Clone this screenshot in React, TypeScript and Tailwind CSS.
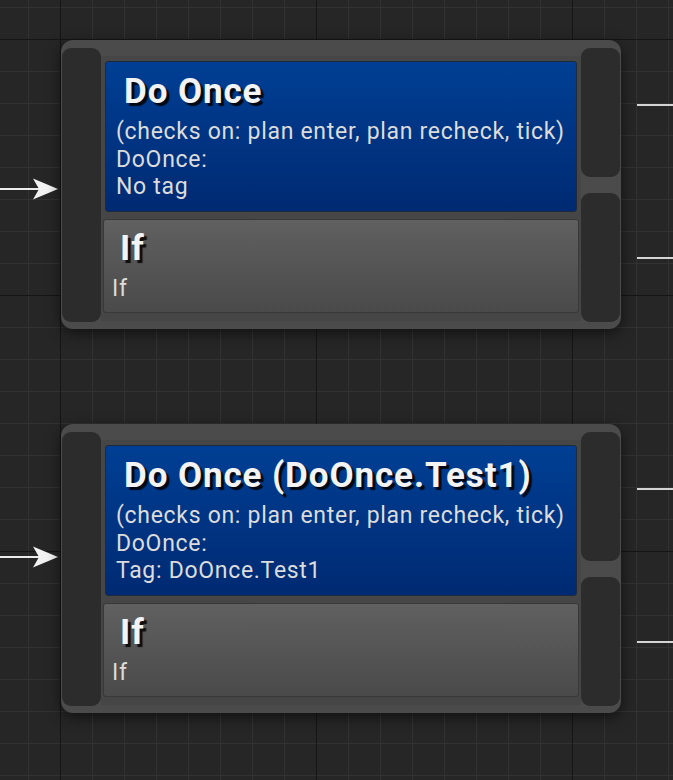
import React from "react";

type NodeProps = {
  title: string;
  lines: string[];
  arrowTop: number;
};

const font = { fontFamily: "Roboto, 'Noto Sans', sans-serif" };

function InArrow({ top }: { top: number }) {
  return (
    <div className="w-[61px] shrink-0">
      <svg width="61" height="24" viewBox="0 0 61 24" style={{ marginTop: top }}>
        <line x1="0" y1="12" x2="40" y2="12" stroke="#ececec" strokeWidth="2" />
        <polygon points="33,1.5 58,12 33,22.5 39,12" fill="#f2f2f2" />
      </svg>
    </div>
  );
}

function OutWires() {
  return (
    <div className="flex-1 flex flex-col pl-[16px] pt-[64px]">
      <div className="h-[2px] bg-[#d4d4d4]" />
      <div className="h-[2px] bg-[#d4d4d4] mt-[151px]" />
    </div>
  );
}

function Node({ title, lines, arrowTop }: NodeProps) {
  return (
    <div className="flex">
      <InArrow top={arrowTop} />
      <div className="flex w-[560px] h-[289px] shrink-0 rounded-[12px] bg-[#4b4b4b] shadow-[0_4px_14px_rgba(0,0,0,0.55)]">
        <div className="ml-px mt-[8px] mb-[7px] w-[39px] rounded-[9px] bg-[#2c2c2c]" />
        <div className="flex-1 mt-[16px] mb-[8px] bg-[#464646] flex flex-col px-[2px]">
          {/* decorator */}
          <div className="mx-[2px] mt-[5px] h-[151px] rounded-[3px] border border-[#1f2a3c] bg-[linear-gradient(to_bottom,#003f94,#002a72)] pl-[10px] pt-[10px]">
            <div
              className="ml-[8px] mb-[6px] text-[35px] leading-[40px] tracking-[0.9px] font-bold text-[#f3f3f3] [text-shadow:3px_3px_1px_rgba(0,0,0,0.85)]"
              style={font}
            >
              {title}
            </div>
            {lines.map((l) => (
              <div
                key={l}
                className="text-[23px] leading-[27.5px] tracking-[0.7px] text-[#dcdcdc]"
                style={font}
              >
                {l}
              </div>
            ))}
          </div>
          {/* task */}
          <div className="mt-[7px] h-[94px] rounded-[3px] border border-[#383838] bg-[linear-gradient(to_bottom,#606060,#4a4a4a)] pl-[8px] pt-[9px]">
            <div
              className="ml-[8px] mb-[6px] text-[35px] leading-[40px] tracking-[0.9px] font-bold text-[#f3f3f3] [text-shadow:3px_3px_1px_rgba(0,0,0,0.85)]"
              style={font}
            >
              If
            </div>
            <div className="text-[23px] leading-[27.5px] tracking-[0.7px] text-[#dcdcdc]" style={font}>
              If
            </div>
          </div>
        </div>
        <div className="mr-px mt-[8px] mb-[7px] w-[39px] flex flex-col gap-[16px]">
          <div className="flex-1 rounded-[9px] bg-[#2c2c2c]" />
          <div className="flex-1 rounded-[9px] bg-[#2c2c2c]" />
        </div>
      </div>
      <OutWires />
    </div>
  );
}

export default function App() {
  return (
    <div className="w-[673px] h-[780px] overflow-hidden bg-[#262626] bg-[linear-gradient(to_right,#151515_1px,transparent_1px),linear-gradient(to_bottom,#151515_1px,transparent_1px),linear-gradient(to_right,#323232_1px,transparent_1px),linear-gradient(to_bottom,#323232_1px,transparent_1px)] [background-size:256px_256px,256px_256px,32px_32px,32px_32px] [background-position:60px_39px,60px_39px,28px_7px,28px_7px] pt-[40px] flex flex-col gap-[95px]">
      <Node
        title="Do Once"
        lines={["(checks on: plan enter, plan recheck, tick)", "DoOnce:", "No tag"]}
        arrowTop={137}
      />
      <Node
        title="Do Once (DoOnce.Test1)"
        lines={["(checks on: plan enter, plan recheck, tick)", "DoOnce:", "Tag: DoOnce.Test1"]}
        arrowTop={121}
      />
    </div>
  );
}
